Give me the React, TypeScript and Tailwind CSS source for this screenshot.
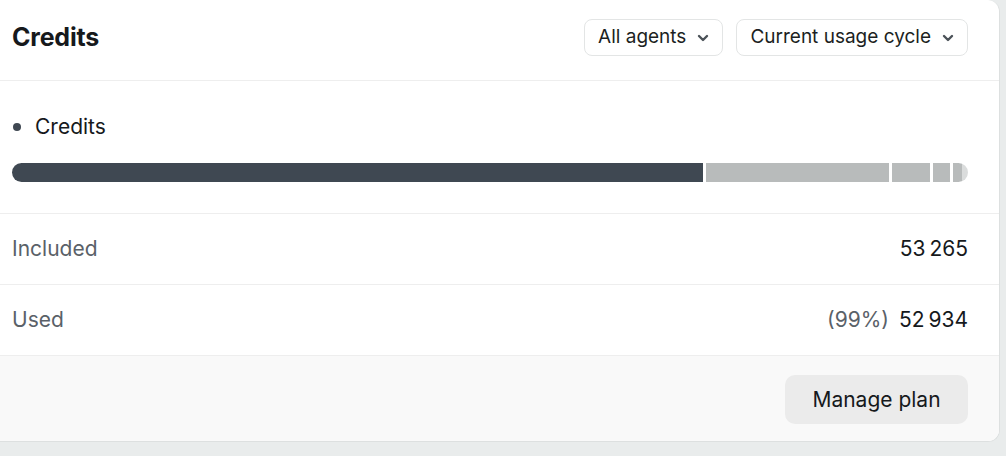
import React from "react";

function Chevron() {
  return (
    <svg width="12" height="8" viewBox="0 0 12 8" className="ml-[11px]">
      <path d="M2 2l4 4 4-4" fill="none" stroke="#4b5258" strokeWidth="2.4" strokeLinecap="round" strokeLinejoin="round" />
    </svg>
  );
}

function Select({ label }: { label: string }) {
  return (
    <button className="flex h-[37px] items-center rounded-lg border border-[#e3e5e5] bg-white pl-[13px] pr-[13px] text-[19px] text-[#1c1f22]">
      {label}
      <Chevron />
    </button>
  );
}

const segments = [183, 38, 17, 9];

export default function App() {
  return (
    <div className="h-[456px] w-full bg-[#e9ecec] pr-[6px] pb-[14px]" style={{ fontFamily: "Inter, 'Liberation Sans', sans-serif" }}>
      <div className="flex h-full flex-col overflow-hidden rounded-br-xl rounded-tr-xl border-r border-b border-[#dde0e0] bg-white">
        <div className="flex h-[81px] shrink-0 items-center justify-between border-b border-[#eeeeee] pl-[12px] pr-[31px] pb-[5px]">
          <h1 className="text-[25px] font-bold tracking-[-0.2px] text-[#16191c]">Credits</h1>
          <div className="flex gap-[13px]">
            <Select label="All agents" />
            <Select label="Current usage cycle" />
          </div>
        </div>

        <div className="h-[133px] shrink-0 border-b border-[#eeeeee] pl-[12px] pr-[31px] pt-[30px]">
          <div className="flex items-center gap-[14px] text-[21px] text-[#16191c]">
            <span className="ml-[1px] h-[8px] w-[8px] rounded-full bg-[#3f4852]" />
            Credits
          </div>
          <div className="mt-[20px] flex h-[19px] overflow-hidden rounded-full">
            <div className="h-full w-[691px] bg-[#3f4852]" />
            {segments.map((w, i) => (
              <div key={i} className="h-full border-l-[3px] border-white bg-[#b8bbbb]" style={{ width: w + 3 }} />
            ))}
            <div className="h-full flex-1 bg-[#dadcdc]" />
          </div>
        </div>

        <div className="flex h-[71px] shrink-0 items-center justify-between border-b border-[#eeeeee] pl-[12px] pr-[31px] text-[21px]">
          <span className="text-[#5a6168]">Included</span>
          <span className="text-[#16191c]">53{"\u2009"}265</span>
        </div>
        <div className="flex h-[71px] shrink-0 items-center justify-between border-b border-[#eeeeee] pl-[12px] pr-[31px] text-[21px]">
          <span className="text-[#5a6168]">Used</span>
          <span>
            <span className="mr-[10px] text-[#5a6168]">(99%)</span>
            <span className="text-[#16191c]">52{"\u2009"}934</span>
          </span>
        </div>

        <div className="flex flex-1 items-center justify-end bg-[#f9f9f9] pr-[31px] pt-[2px]">
          <button className="h-[49px] w-[183px] rounded-[10px] bg-[#ebebeb] text-[21px] text-[#16191c]">Manage plan</button>
        </div>
      </div>
    </div>
  );
}
